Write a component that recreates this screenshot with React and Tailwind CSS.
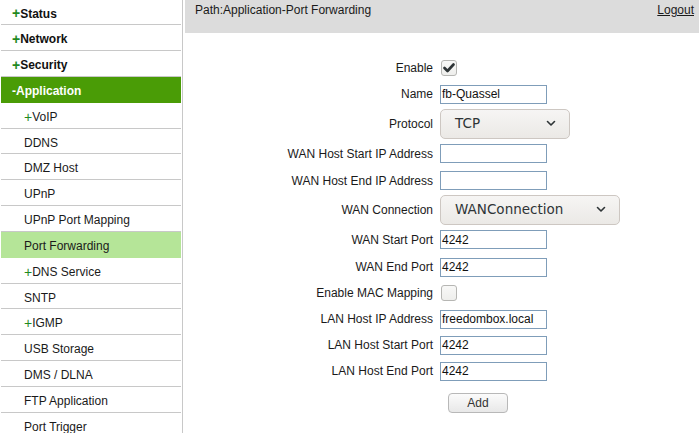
import React from 'react';

const menu = [
  { label: 'Status', level: 0, h: 24 },
  { label: 'Network', level: 0, h: 25 },
  { label: 'Security', level: 0, h: 25 },
  { label: 'Application', level: 0, h: 25, open: true },
  { label: 'VoIP', level: 1, h: 25, plus: true },
  { label: 'DDNS', level: 1, h: 24 },
  { label: 'DMZ Host', level: 1, h: 25 },
  { label: 'UPnP', level: 1, h: 25 },
  { label: 'UPnP Port Mapping', level: 1, h: 25 },
  { label: 'Port Forwarding', level: 1, h: 25, active: true },
  { label: 'DNS Service', level: 1, h: 25, plus: true },
  { label: 'SNTP', level: 1, h: 24 },
  { label: 'IGMP', level: 1, h: 25, plus: true },
  { label: 'USB Storage', level: 1, h: 25 },
  { label: 'DMS / DLNA', level: 1, h: 25 },
  { label: 'FTP Application', level: 1, h: 25 },
  { label: 'Port Trigger', level: 1, h: 25 },
];

const MenuRow = ({ item }) => {
  if (item.level === 0) {
    return (
      <div
        style={{ height: item.h }}
        className={`flex items-center pt-[3px] pl-[11px] font-bold box-border border-b ${
          item.open ? 'bg-[#4a9c06] text-white border-[#4a9c06]' : 'text-[#111] border-[#c8c8c8]'
        }`}
      >
        {item.open ? (
          <span>-</span>
        ) : (
          <span className="text-[#1f8a1f] text-[14px]">+</span>
        )}
        <span>{item.label}</span>
      </div>
    );
  }
  return (
    <div
      style={{ height: item.h }}
      className={`flex items-center pt-[3px] pl-[23px] box-border border-b ${
        item.active ? 'bg-[#b5e598] border-[#b5e598]' : 'border-[#c8c8c8]'
      } text-[#1a1a1a]`}
    >
      {item.plus && <span className="text-[#1f8a1f] text-[14px] leading-none">+</span>}
      <span>{item.label}</span>
    </div>
  );
};

const Chevron = () => (
  <svg width="10" height="7" viewBox="0 0 10 7" fill="none">
    <path d="M1.5 1.5 L5 5 L8.5 1.5" stroke="#2e3436" strokeWidth="1.6" strokeLinecap="round" strokeLinejoin="round" />
  </svg>
);

const Select = ({ value, width }) => (
  <div
    style={{ width }}
    className="h-[30px] flex items-center justify-between pl-[14px] pr-[13px] rounded-[5px] border border-[#cdc7c2] bg-gradient-to-b from-[#f6f5f4] to-[#ebe9e6] text-[#2e3436] text-[13.5px] [font-family:'DejaVu_Sans',sans-serif]"
  >
    <span>{value}</span>
    <Chevron />
  </div>
);

const Checkbox = ({ checked }) => (
  <div className="w-[16px] h-[16px] rounded-[3px] border border-[#b6b6b3] bg-gradient-to-b from-[#f8f8f7] to-[#eeeeec] flex items-center justify-center ml-[1px]">
    {checked && (
      <svg width="12" height="10" viewBox="0 0 12 10">
        <path d="M1.5 5 L4.5 8 L10.5 1.5" stroke="#2e3436" strokeWidth="2.6" fill="none" strokeLinecap="round" strokeLinejoin="round" />
      </svg>
    )}
  </div>
);

const TextBox = ({ value }) => (
  <div className="w-[107px] h-[19px] border border-[#7f9db9] bg-white flex items-center pl-[1px] text-[#111] whitespace-nowrap overflow-hidden">
    {value}
  </div>
);

const rows = [
  { label: 'Enable', h: 26, field: <Checkbox checked /> },
  { label: 'Name', h: 26, field: <TextBox value="fb-Quassel" /> },
  { label: 'Protocol', h: 33, field: <Select value="TCP" width={130} /> },
  { label: 'WAN Host Start IP Address', h: 27, field: <TextBox value="" /> },
  { label: 'WAN Host End IP Address', h: 27, field: <TextBox value="" /> },
  { label: 'WAN Connection', h: 31, field: <Select value="WANConnection" width={180} /> },
  { label: 'WAN Start Port', h: 29, field: <TextBox value="4242" /> },
  { label: 'WAN End Port', h: 26, field: <TextBox value="4242" /> },
  { label: 'Enable MAC Mapping', h: 26, field: <Checkbox /> },
  { label: 'LAN Host IP Address', h: 26, field: <TextBox value="freedombox.local" /> },
  { label: 'LAN Host Start Port', h: 26, field: <TextBox value="4242" /> },
  { label: 'LAN Host End Port', h: 26, field: <TextBox value="4242" /> },
];

export default function App() {
  return (
    <div className="flex h-[433px] w-[699px] overflow-hidden bg-white text-[12px] [font-family:'Liberation_Sans',Arial,sans-serif]">
      <div className="w-[183px] shrink-0 pl-[1px] border-r border-[#c8c8c8]">
        <div className="w-[180px]">
          {menu.map((item) => (
            <MenuRow key={item.label} item={{ ...item, h: item.h + 1 }} />
          ))}
        </div>
      </div>

      <div className="ml-[2px] flex-1 flex flex-col">
        <div className="h-[33px] bg-[#dcdcdc] flex justify-between pl-[10px] pr-[5px] pt-[1px] text-[#1a1a1a]">
          <span>Path:Application-Port Forwarding</span>
          <a className="underline text-[#1a1a1a]">Logout</a>
        </div>

        <div className="mt-[22px] flex flex-col">
          {rows.map((r) => (
            <div key={r.label} style={{ height: r.h }} className="flex items-center">
              <div className="w-[248px] text-right text-[#1a1a1a]">{r.label}</div>
              <div className="ml-[7px] flex items-center">{r.field}</div>
            </div>
          ))}
          <div className="flex mt-[9px]">
            <div className="w-[248px]" />
            <button className="ml-[15px] w-[60px] h-[20px] rounded-[4px] border border-[#b8b8b8] bg-gradient-to-b from-[#fbfbfb] to-[#e8e8e8] text-[#333] text-[12px]">
              Add
            </button>
          </div>
        </div>
      </div>
    </div>
  );
}
